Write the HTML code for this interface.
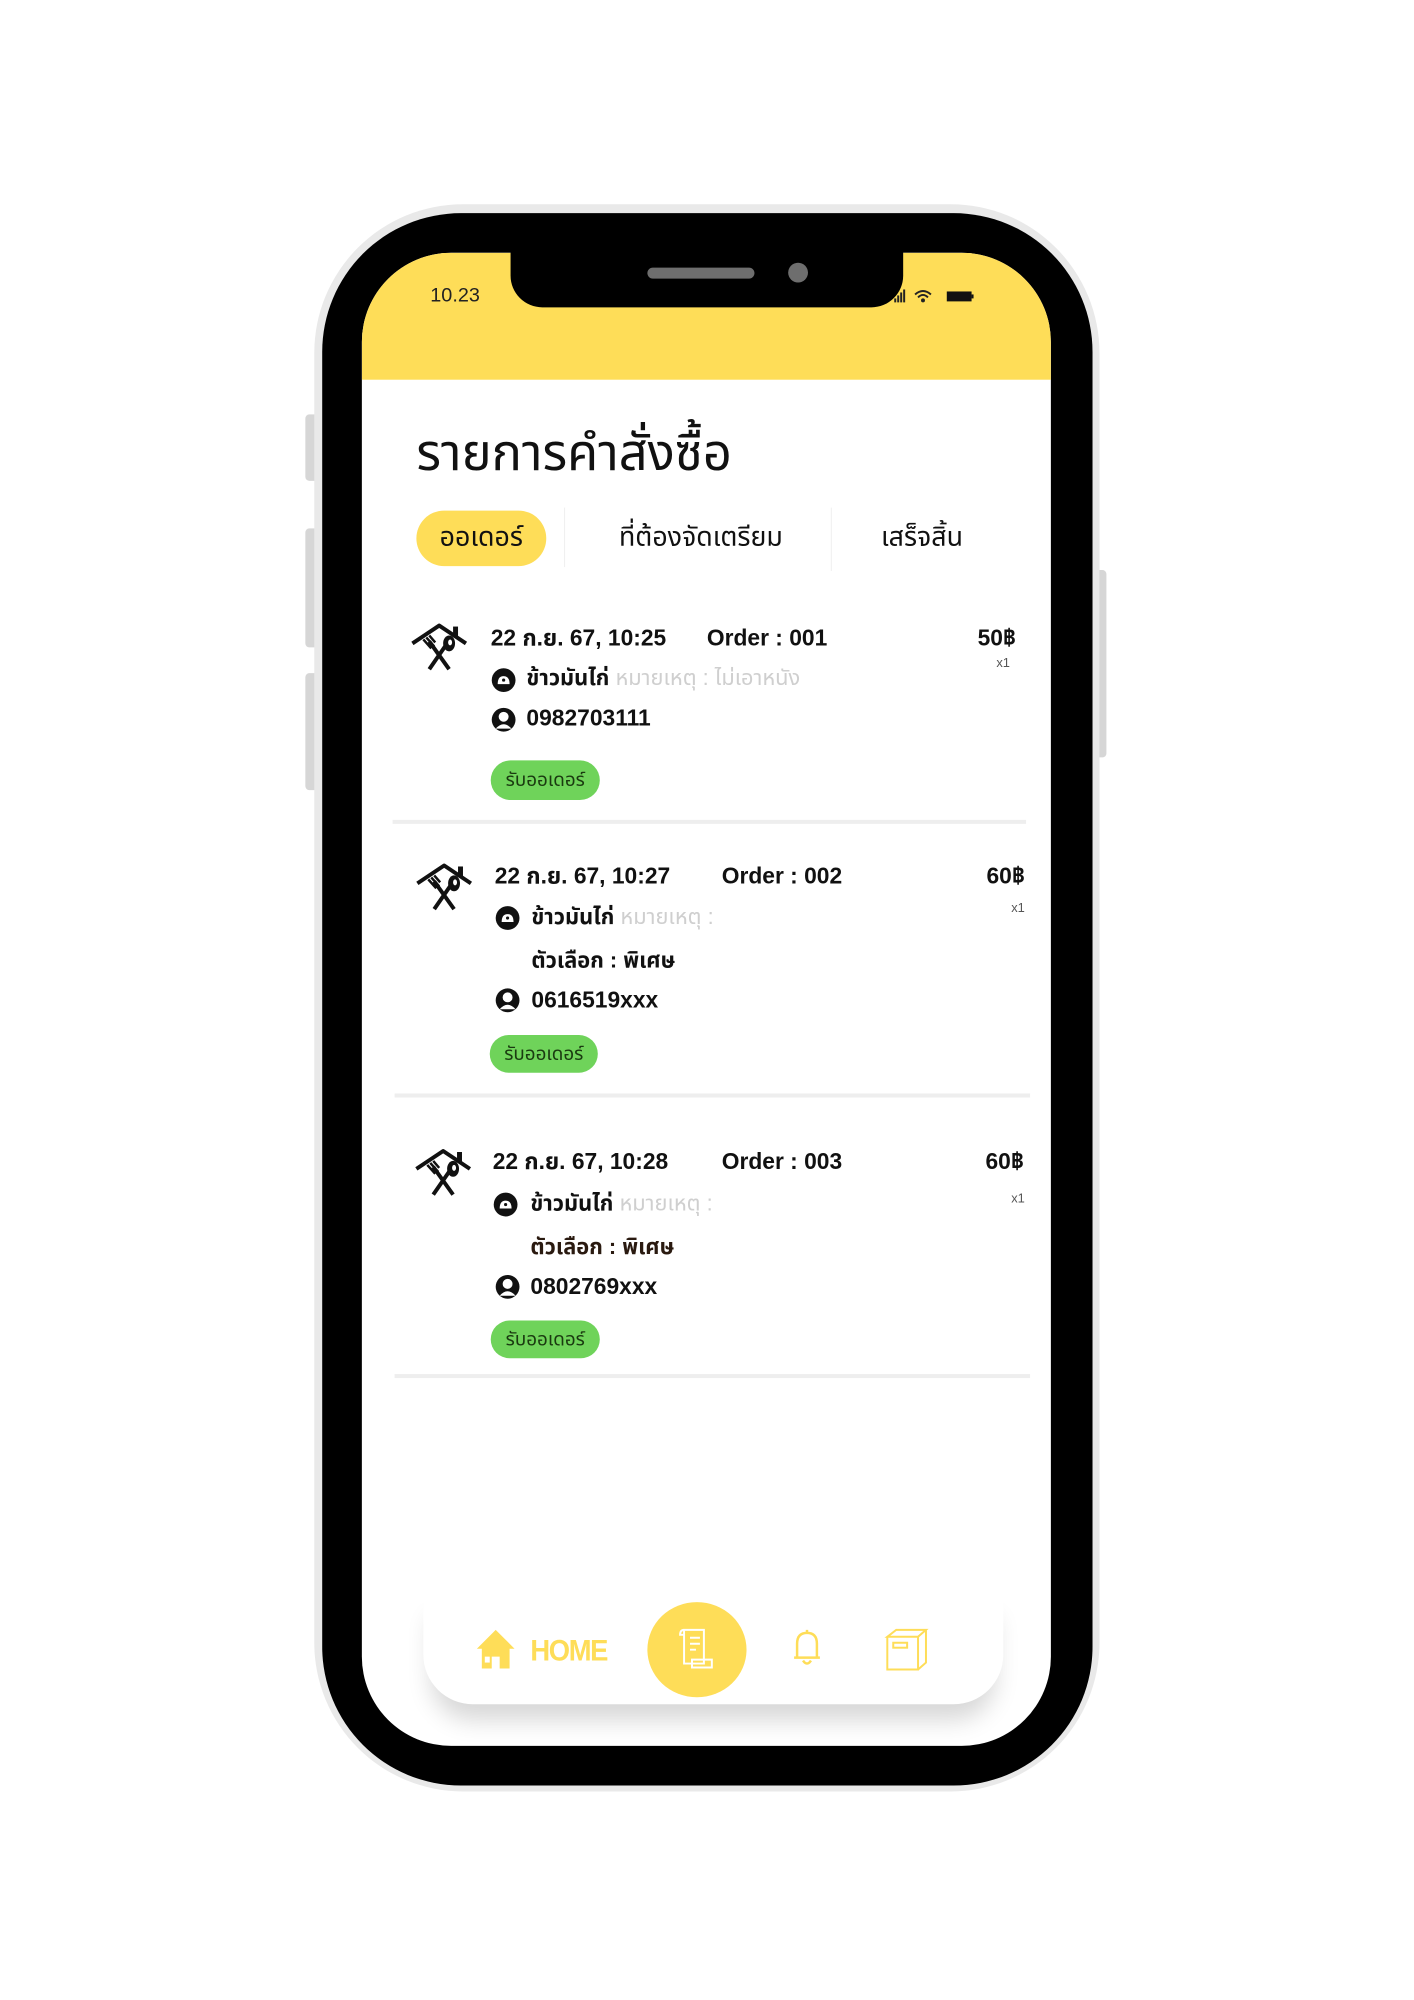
<!DOCTYPE html>
<html><head><meta charset="utf-8">
<style>
*{margin:0;padding:0;box-sizing:border-box}
body{width:1414px;height:2000px;background:#fff;position:relative;overflow:hidden;font-family:"Liberation Sans","Noto Sans Thai","Tahoma",sans-serif;color:#111}
#w{position:absolute;left:0;top:0;width:1414px;height:2000px;transform:scale(0.9914);transform-origin:0 0}
.a{position:absolute}
.t{position:absolute;white-space:nowrap;line-height:1}
.b{font-weight:bold}
.btn{position:absolute;background:#6fd35a;border-radius:20px;font-size:19px;color:#1a3a10;display:flex;align-items:center;justify-content:center}
.div{position:absolute;height:4px;background:#eeeeee}
.gray{color:#cfcfcf;font-weight:normal}
</style></head><body><div id="w">
<div class="a" style="left:308px;top:418px;width:14px;height:67px;background:#d6d6d6;border-radius:4px"></div>
<div class="a" style="left:308px;top:533px;width:14px;height:120px;background:#d6d6d6;border-radius:4px"></div>
<div class="a" style="left:308px;top:679px;width:14px;height:118px;background:#d6d6d6;border-radius:4px"></div>
<div class="a" style="left:1104px;top:575px;width:12px;height:189px;background:#d6d6d6;border-radius:4px"></div>
<div class="a" style="left:317px;top:206px;width:792px;height:1601px;background:#e9e9e9;border-radius:150px"></div>
<div class="a" style="left:325px;top:215px;width:777px;height:1586px;background:#000;border-radius:140px"></div>
<div class="a" style="left:365px;top:255px;width:695px;height:1506px;background:#fff;border-radius:90px;overflow:hidden">
  <div class="a" style="left:0;top:0;width:695px;height:128px;background:#fedd58"></div>
</div>
<div class="a" style="left:515px;top:250px;width:396px;height:60px;background:#000;border-radius:0 0 32px 32px"></div>
<div class="a" style="left:653px;top:270px;width:108px;height:11px;background:#6e6e6e;border-radius:6px"></div>
<div class="a" style="left:795px;top:265px;width:20px;height:20px;background:#6e6e6e;border-radius:50%"></div>
<div class="t" style="left:434px;top:288px;font-size:20px;color:#222">10.23</div>
<svg class="a" style="left:898px;top:290px" width="90" height="18" viewBox="0 0 90 18">
<rect x="4" y="11" width="2" height="4" fill="#222"/><rect x="7" y="8" width="2" height="7" fill="#222"/><rect x="10" y="5" width="2" height="10" fill="#222"/><rect x="13" y="2" width="2" height="13" fill="#222"/>
<path d="M25 7 Q33 0 41 7 M28 10 Q33 5 38 10" stroke="#222" stroke-width="2" fill="none"/><circle cx="33" cy="13" r="2" fill="#222"/>
<rect x="57" y="4" width="25" height="10" fill="#111"/><rect x="82" y="7" width="2" height="4" fill="#111"/>
</svg>
<div class="t" style="left:420px;top:431px;font-size:51px;color:#111">รายการคำสั่งซื้อ</div>
<div class="a" style="left:420px;top:515px;width:131px;height:56px;background:#fedd58;border-radius:28px"></div>
<div class="t" style="left:420px;top:528px;width:131px;text-align:center;font-size:27px">ออเดอร์</div>
<div class="a" style="left:569px;top:512px;width:1px;height:60px;background:#eee"></div>
<div class="a" style="left:838px;top:512px;width:1px;height:64px;background:#eee"></div>
<div class="t" style="left:607px;top:528px;width:200px;text-align:center;font-size:27px">ที่ต้องจัดเตรียม</div>
<div class="t" style="left:860px;top:528px;width:140px;text-align:center;font-size:27px">เสร็จสิ้น</div>

<svg width="0" height="0" style="position:absolute">
<defs>
<symbol id="logo" viewBox="0 0 60 52">
<path d="M3 22 L30 4 L57 22" stroke="#111" stroke-width="4" fill="none" stroke-linejoin="round"/>
<rect x="44" y="5" width="5" height="10" fill="#111"/>
<path d="M20 20 L40 48 M38 22 L20 48" stroke="#111" stroke-width="4" fill="none"/>
<path d="M14 18 L22 27 M17 16 L25 25 M20 14 L26 21" stroke="#111" stroke-width="2.5"/>
<ellipse cx="40" cy="22" rx="6" ry="8" fill="#111"/><ellipse cx="41" cy="21" rx="2" ry="3" fill="#fff"/>
</symbol>
<symbol id="dish" viewBox="0 0 26 26"><circle cx="13" cy="13" r="12" fill="#111"/><path d="M7 17 Q7 9 13 9 Q19 9 19 17 Z" fill="#fff"/><circle cx="13" cy="13" r="1.6" fill="#111"/></symbol>
<symbol id="user" viewBox="0 0 26 26"><circle cx="13" cy="13" r="12" fill="#111"/><circle cx="13" cy="10" r="5" fill="#fff"/><path d="M5 22 Q13 13 21 22" fill="#fff"/></symbol>
</defs></svg>

<svg class="a" style="left:413px;top:627px" width="60" height="52"><use href="#logo"/></svg>
<div class="t b" style="left:495px;top:632px;font-size:23px">22 ก.ย. 67, 10:25</div>
<div class="t b" style="left:713px;top:632px;font-size:23px">Order : 001</div>
<div class="t b" style="left:960px;top:632px;width:65px;text-align:right;font-size:23px">50฿</div>
<div class="t" style="left:1005px;top:662px;font-size:13px;color:#555">x1</div>
<svg class="a" style="left:495px;top:673px" width="26" height="26"><use href="#dish"/></svg>
<div class="t b" style="left:531px;top:673px;font-size:22px">ข้าวมันไก่ <span class="gray">หมายเหตุ : ไม่เอาหนัง</span></div>
<svg class="a" style="left:495px;top:713px" width="26" height="26"><use href="#user"/></svg>
<div class="t b" style="left:531px;top:713px;font-size:23px">0982703111</div>
<div class="btn" style="left:495px;top:767px;width:110px;height:40px">รับออเดอร์</div>
<div class="div" style="left:396px;top:827px;width:639px"></div>

<svg class="a" style="left:418px;top:869px" width="60" height="52"><use href="#logo"/></svg>
<div class="t b" style="left:499px;top:872px;font-size:23px">22 ก.ย. 67, 10:27</div>
<div class="t b" style="left:728px;top:872px;font-size:23px">Order : 002</div>
<div class="t b" style="left:969px;top:872px;width:65px;text-align:right;font-size:23px">60฿</div>
<div class="t" style="left:1020px;top:909px;font-size:13px;color:#555">x1</div>
<svg class="a" style="left:499px;top:913px" width="26" height="26"><use href="#dish"/></svg>
<div class="t b" style="left:536px;top:914px;font-size:22px">ข้าวมันไก่ <span class="gray">หมายเหตุ :</span></div>
<div class="t b" style="left:536px;top:958px;font-size:22px">ตัวเลือก : พิเศษ</div>
<svg class="a" style="left:499px;top:996px" width="26" height="26"><use href="#user"/></svg>
<div class="t b" style="left:536px;top:997px;font-size:23px">0616519xxx</div>
<div class="btn" style="left:494px;top:1044px;width:109px;height:38px">รับออเดอร์</div>
<div class="div" style="left:398px;top:1103px;width:641px"></div>

<svg class="a" style="left:417px;top:1157px" width="60" height="52"><use href="#logo"/></svg>
<div class="t b" style="left:497px;top:1160px;font-size:23px">22 ก.ย. 67, 10:28</div>
<div class="t b" style="left:728px;top:1160px;font-size:23px">Order : 003</div>
<div class="t b" style="left:968px;top:1160px;width:65px;text-align:right;font-size:23px">60฿</div>
<div class="t" style="left:1020px;top:1202px;font-size:13px;color:#555">x1</div>
<svg class="a" style="left:497px;top:1202px" width="26" height="26"><use href="#dish"/></svg>
<div class="t b" style="left:535px;top:1203px;font-size:22px">ข้าวมันไก่ <span class="gray">หมายเหตุ :</span></div>
<div class="t b" style="left:535px;top:1247px;font-size:22px;color:#2a1a10">ตัวเลือก : พิเศษ</div>
<svg class="a" style="left:499px;top:1285px" width="26" height="26"><use href="#user"/></svg>
<div class="t b" style="left:535px;top:1286px;font-size:23px">0802769xxx</div>
<div class="btn" style="left:495px;top:1332px;width:110px;height:38px">รับออเดอร์</div>
<div class="div" style="left:398px;top:1386px;width:641px"></div>

<div class="a" style="left:427px;top:1600px;width:585px;height:119px;background:#fff;border-radius:0 0 50px 50px;box-shadow:0 24px 24px -8px rgba(0,0,0,0.16)"></div>
<svg class="a" style="left:479px;top:1641px" width="42" height="44" viewBox="0 0 42 44">
<path d="M2 22 L21 3 L40 22 L35 22 L35 42 L25 42 L25 30 L17 30 L17 42 L7 42 L7 22 Z" fill="#fedd58"/>
<rect x="10" y="30" width="5" height="6" fill="#fff"/></svg>
<div class="t b" style="left:535px;top:1651px;font-size:30px;color:#fedd58;letter-spacing:-1.5px;transform:scaleX(0.92);transform-origin:0 0">HOME</div>
<div class="a" style="left:653px;top:1616px;width:100px;height:96px;background:#fedd58;border-radius:50%"></div>
<svg class="a" style="left:682px;top:1640px" width="42" height="46" viewBox="0 0 42 46" fill="none" stroke="#fff" stroke-width="2">
<path d="M8 4 H28 V38 H8 Z M8 4 Q4 4 4 9 H8"/><path d="M14 12 H24 M14 18 H24 M14 24 H20"/><path d="M16 34 H36 V42 H16 Z"/></svg>
<svg class="a" style="left:797px;top:1642px" width="34" height="42" viewBox="0 0 34 42" fill="none" stroke="#fedd58" stroke-width="2.5">
<path d="M7 30 V16 Q7 5 17 5 Q27 5 27 16 V30 H4 H30"/><path d="M13 33 Q17 39 21 33"/><path d="M17 2 V5"/></svg>
<svg class="a" style="left:892px;top:1641px" width="46" height="46" viewBox="0 0 46 46" fill="none" stroke="#fedd58" stroke-width="2">
<path d="M3 10 L12 3 H42 L34 10 Z M3 10 V43 H34 V10 M34 43 L42 36 V3"/><rect x="9" y="16" width="14" height="5"/></svg>
</div></body></html>
